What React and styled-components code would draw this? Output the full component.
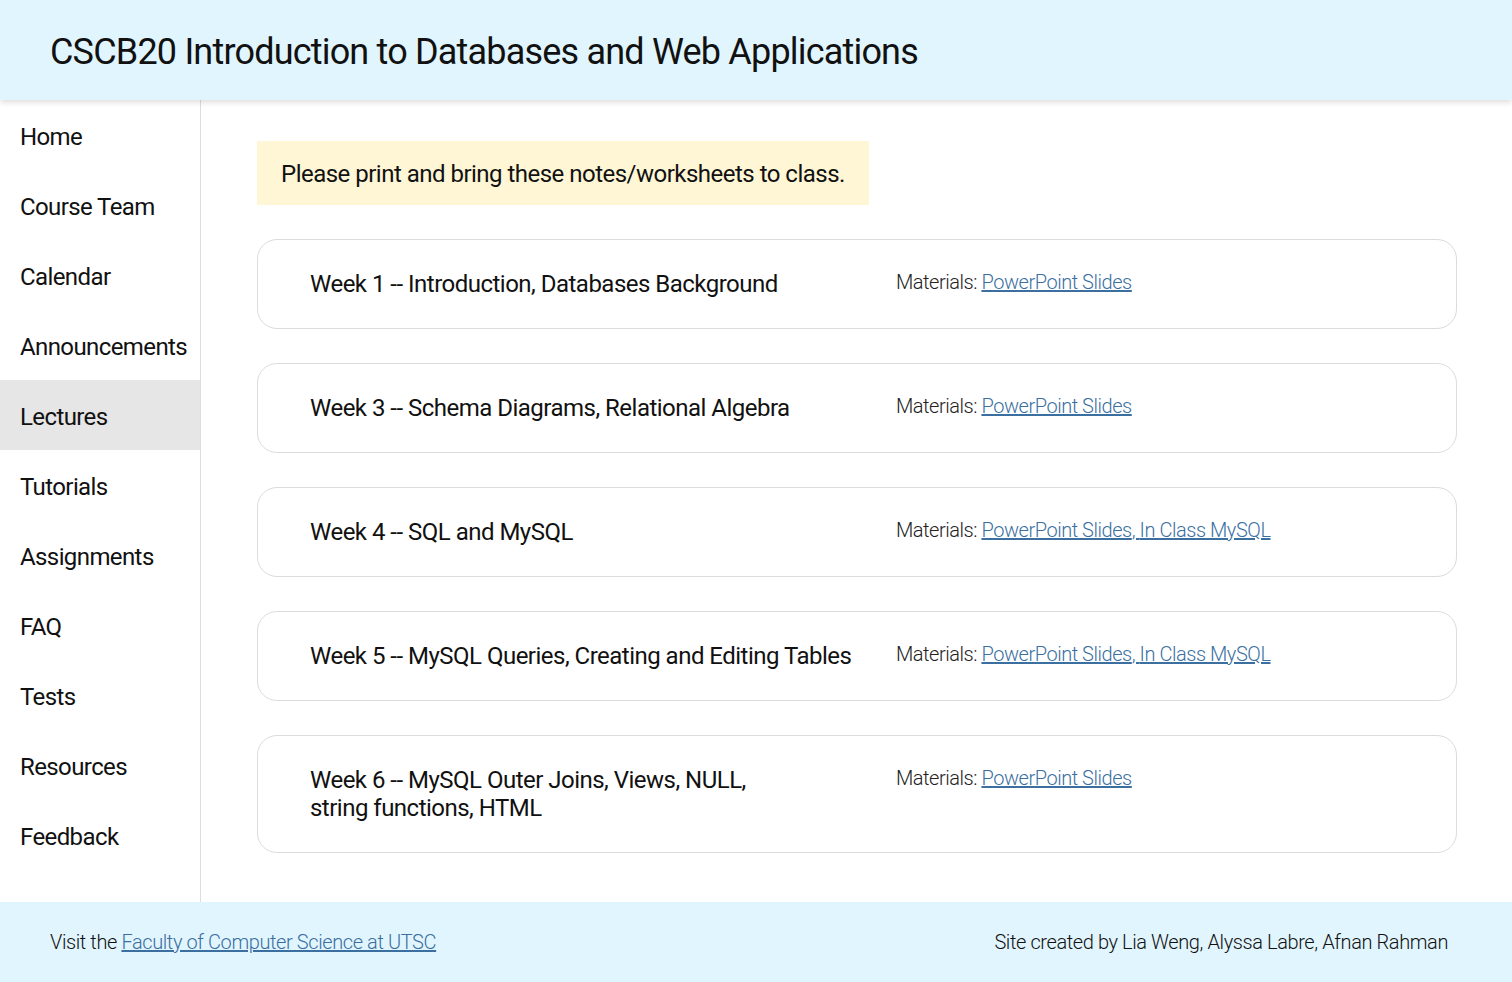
import React from 'react';
import styled, { createGlobalStyle } from 'styled-components';

const navItems = [
  'Home', 'Course Team', 'Calendar', 'Announcements', 'Lectures', 'Tutorials',
  'Assignments', 'FAQ', 'Tests', 'Resources', 'Feedback',
];

const weeks = [
  { title: 'Week 1 -- Introduction, Databases Background', links: ['PowerPoint Slides'] },
  { title: 'Week 3 -- Schema Diagrams, Relational Algebra', links: ['PowerPoint Slides'] },
  { title: 'Week 4 -- SQL and MySQL', links: ['PowerPoint Slides', 'In Class MySQL'] },
  { title: 'Week 5 -- MySQL Queries, Creating and Editing Tables', links: ['PowerPoint Slides', 'In Class MySQL'] },
  { title: ['Week 6 -- MySQL Outer Joins, Views, NULL,', 'string functions, HTML'], links: ['PowerPoint Slides'] },
];

function App() {
  return (
    <React.Fragment>
      <GlobalStyle />
      <Header>{/* 상단 제목 */}
        <Title>CSCB20 Introduction to Databases and Web Applications</Title>
      </Header>
      <Body>
        <Sidebar>
          {navItems.map((item) => (
            <NavItem key={item} href="#" $active={item === 'Lectures'}>{item}</NavItem>
          ))}
        </Sidebar>
        <Main>
          <Note>Please print and bring these notes/worksheets to class.</Note>
          {weeks.map((w, i) => (
            <Card key={i}>
              <WeekTitle>
                {Array.isArray(w.title)
                  ? w.title.map((line, j) => (
                      <React.Fragment key={j}>{line}{j === 0 && <br />}</React.Fragment>
                    ))
                  : w.title}
              </WeekTitle>
              <Materials>
                Materials:{' '}
                {w.links.map((l, j) => (
                  <React.Fragment key={l}>
                    <Link href="#">{l}{j < w.links.length - 1 ? ', ' : ''}</Link>
                  </React.Fragment>
                ))}
              </Materials>
            </Card>
          ))}
        </Main>
      </Body>
      <Footer>{/* 하단 */}
        <FooterText>
          Visit the <Link href="#">Faculty of Computer Science at UTSC</Link>
        </FooterText>
        <FooterText>Site created by Lia Weng, Alyssa Labre, Afnan Rahman</FooterText>
      </Footer>
    </React.Fragment>
  );
}

const GlobalStyle = createGlobalStyle`
  body {
    margin: 0;
    font-family: Roboto, "Liberation Sans", sans-serif;
    letter-spacing: -0.032em;
    color: #111;
    background: #fff;
  }
`;

const Header = styled.header`
  position: relative;
  z-index: 2;
  box-sizing: border-box;
  height: 100px;
  display: flex;
  align-items: center;
  padding: 4px 50px 0;
  background-color: #e1f5fe;
  box-shadow: 0 2px 6px rgba(0, 0, 0, 0.15);
`;

const Title = styled.h1`
  margin: 0;
  font-size: 36px;
  font-weight: 400;
  letter-spacing: -0.0225em;
  color: #111;
`;

const Body = styled.div`
  display: flex;
`;

const Sidebar = styled.nav`
  width: 200px;
  flex-shrink: 0;
  border-right: 1px solid #ddd;
  display: flex;
  flex-direction: column;
`;

const NavItem = styled.a`
  box-sizing: border-box;
  height: 70px;
  display: flex;
  align-items: center;
  padding: 4px 0 0 20px;
  font-size: 24px;
  letter-spacing: -0.025em;
  color: #111;
  text-decoration: none;
  background-color: ${(p) => (p.$active ? '#e6e6e6' : 'transparent')};
`;

const Main = styled.main`
  flex: 1;
  display: flex;
  flex-direction: column;
  align-items: flex-start;
  gap: 34px;
  padding: 41px 55px 49px 56px;
`;

const Note = styled.div`
  padding: 19px 24px 17px;
  line-height: 28px;
  font-size: 24px;
  background-color: #fff6d6;
`;

const Card = styled.section`
  box-sizing: border-box;
  width: 1200px;
  display: grid;
  grid-template-columns: 586px 1fr;
  align-items: start;
  padding: 30px 52px;
  border: 1px solid #dcdcdc;
  border-radius: 20px;
`;

const WeekTitle = styled.div`
  font-size: 24px;
  line-height: 28px;
`;

const Materials = styled.div`
  font-size: 20px;
  line-height: 24px;
  font-weight: 300;
  letter-spacing: -0.023em;
  color: #222;
`;

const Link = styled.a`
  color: #3a6f9f;
  text-decoration: underline;
  font-weight: 300;
`;

const Footer = styled.footer`
  height: 80px;
  display: flex;
  align-items: center;
  justify-content: space-between;
  padding: 0 64px 0 50px;
  background-color: #e1f5fe;
`;

const FooterText = styled.div`
  font-size: 20px;
  font-weight: 300;
  letter-spacing: -0.02em;
  color: #111;
`;

export default App;
